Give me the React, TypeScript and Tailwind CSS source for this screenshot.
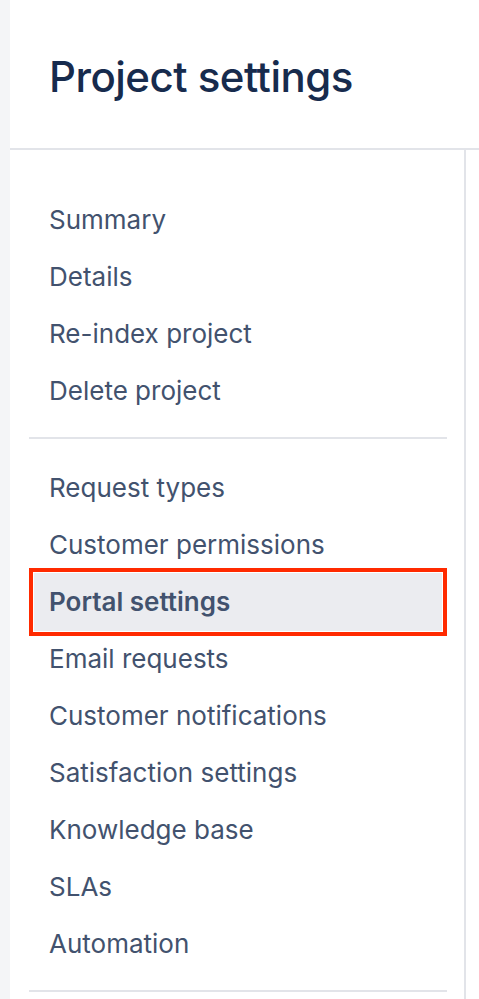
const groups = [
  ["Summary", "Details", "Re-index project", "Delete project"],
  [
    "Request types",
    "Customer permissions",
    "Portal settings",
    "Email requests",
    "Customer notifications",
    "Satisfaction settings",
    "Knowledge base",
    "SLAs",
    "Automation",
  ],
];

const active = "Portal settings";

export default function App() {
  return (
    <div className="flex min-h-[999px] bg-white font-['Inter',sans-serif]">
      {/* left gutter */}
      <div className="w-[10px] shrink-0 bg-[#f4f5f7]" />

      <div className="flex flex-1 flex-col">
        {/* Header */}
        <div className="flex h-[150px] items-center border-b-2 border-[#e2e4e9] pl-[39px]">
          <h1 className="mt-[4px] text-[42px] font-medium tracking-[-0.012em] text-[#172b4d]">
            Project settings
          </h1>
        </div>

        <div className="flex flex-1">
          {/* Sidebar */}
          <nav className="w-[456px] shrink-0 border-r-2 border-[#e2e4e9] pl-[19px] pr-[17px] pt-[41px]">
            {groups.map((items, gi) => (
              <div key={gi}>
                <ul>
                  {items.map((label) =>
                    label === active ? (
                      <li
                        key={label}
                        className="-my-[5.5px] flex h-[68px] items-center border-4 border-[#ff2a00] bg-[#ebecf0] pl-4 text-[26px] font-semibold text-[#42526e] shadow-[inset_0_0_0_1px_#fff]"
                      >
                        {label}
                      </li>
                    ) : (
                      <li
                        key={label}
                        className="flex h-[57px] items-center pl-5 text-[26px] text-[#42526e]"
                      >
                        {label}
                      </li>
                    )
                  )}
                </ul>
                <div className="mb-[20px] mt-[18px] h-[2px] bg-[#e2e4e9]" />
              </div>
            ))}
          </nav>
          <div className="flex-1" />
        </div>
      </div>
    </div>
  );
}
